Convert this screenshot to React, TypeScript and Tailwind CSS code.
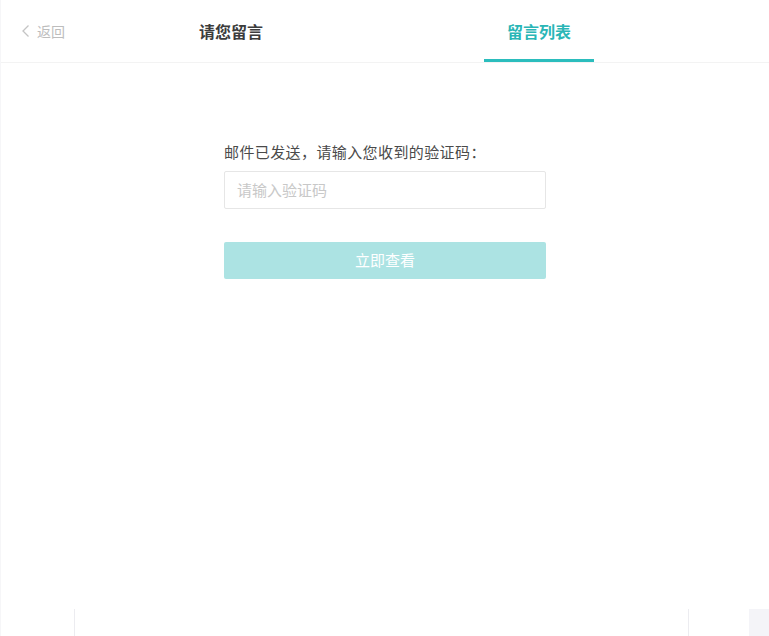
import React from "react";

export default function App() {
  const font = { fontFamily: '"Noto Sans CJK SC", "Noto Sans", sans-serif' };
  return (
    <div className="w-[769px] h-[636px] bg-white relative overflow-hidden border-l border-[#f6f6f8]" style={font}>
      <div className="flex h-[63px] border-b border-[#f3f3f3]">
        <div className="w-[175px] pl-[20px] flex items-center text-[14px] text-[#bdbdbd]">
          <svg width="10" height="14" viewBox="0 0 10 14" className="mr-[6px]">
            <path d="M7.5 1.5 L2 7 L7.5 12.5" fill="none" stroke="#c4c4c4" strokeWidth="1.3" />
          </svg>
          <span>返回</span>
        </div>
        <div className="w-[110px] flex items-center justify-center text-[16px] font-bold text-[#3c3c3c]">请您留言</div>
        <div className="w-[198px]" />
        <div className="w-[110px] flex items-center justify-center text-[16px] font-bold text-[#2ab6b6] border-b-[3px] border-[#2bbdbd] pt-[3px]">
          留言列表
        </div>
      </div>
      <div className="flex justify-center">
        <div className="w-[322px] pt-[79px]">
          <div className="text-[15px] text-[#4a4a4a] leading-[20px] tracking-[0.4px]">邮件已发送，请输入您收到的验证码：</div>
          <div className="mt-[9px] h-[38px] border border-[#e6e6e6] rounded-[2px] flex items-center px-[12px] text-[15px] text-[#c8c8c8]">
            请输入验证码
          </div>
          <div className="mt-[33px] h-[37px] rounded-[2px] bg-[#ace3e3] flex items-center justify-center text-[15px] text-white">
            立即查看
          </div>
        </div>
      </div>
      <div className="absolute left-[73px] top-[609px] w-px h-[27px] bg-[#ececf0]" />
      <div className="absolute left-[687px] top-[609px] w-px h-[27px] bg-[#ececf0]" />
      <div className="absolute left-[748px] top-[609px] w-[21px] h-[27px] bg-[#f4f4f8]" />
    </div>
  );
}
